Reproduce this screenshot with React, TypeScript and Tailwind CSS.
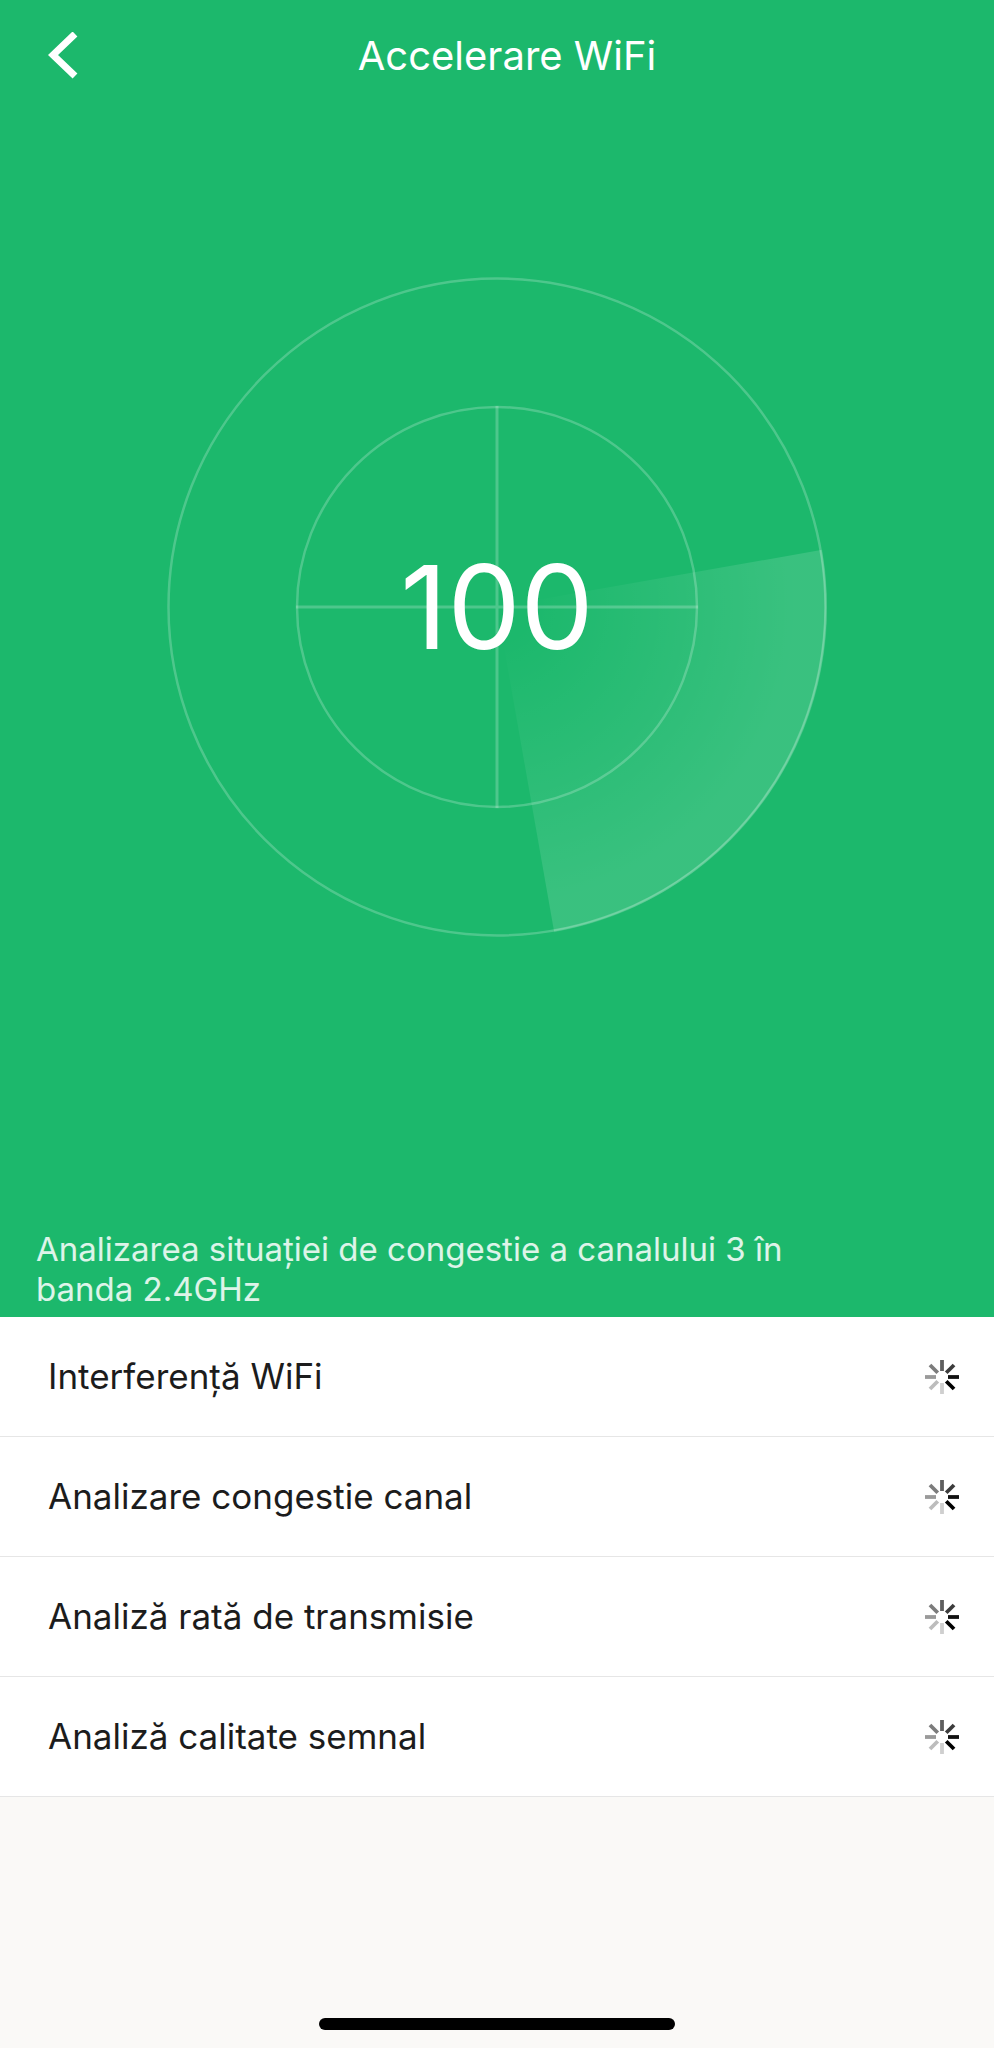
const checks = [
  "Interferență WiFi",
  "Analizare congestie canal",
  "Analiză rată de transmisie",
  "Analiză calitate semnal",
];

// clockwise, starting from the top spoke
const spokes = ["#5e5e5e", "#3c3c3c", "#111111", "#000000", "#cfcfcf", "#bcbcbc", "#9a9a9a", "#7c7c7c"];

function Spinner() {
  return (
    <svg viewBox="0 0 36 36" className="size-9 shrink-0" role="img" aria-label="Se analizează">
      {spokes.map((color, i) => (
        <line
          key={color}
          x1="18"
          y1="1"
          x2="18"
          y2="12"
          stroke={color}
          strokeWidth="3.8"
          transform={`rotate(${i * 45} 18 18)`}
        />
      ))}
    </svg>
  );
}

function Radar({ score }: { score: number }) {
  return (
    <div className="grid w-2/3 max-w-[660px] place-items-center">
      <svg viewBox="0 0 660 660" className="col-start-1 row-start-1 w-full" aria-hidden="true">
        <defs>
          <radialGradient id="sweep" gradientUnits="userSpaceOnUse" cx="330" cy="330" r="329">
            <stop offset="0.1" stopColor="#fff" stopOpacity="0" />
            <stop offset="0.9" stopColor="#fff" stopOpacity="0.13" />
          </radialGradient>
        </defs>
        <path d="M330 330 L654 273 A329 329 0 0 1 387 654 Z" fill="url(#sweep)" />
        <g fill="none" stroke="#fff" strokeOpacity="0.22" strokeWidth="2.5">
          <circle cx="330" cy="330" r="328.5" />
          <circle cx="330" cy="330" r="200" />
          <path d="M129 330 H531 M330 129 V531" strokeWidth="3" />
          <path d="M654 273 A329 329 0 0 1 387 654" strokeOpacity="0.1" />
        </g>
      </svg>
      <p className="col-start-1 row-start-1 text-[116px] leading-none text-white">{score}</p>
    </div>
  );
}

export default function App() {
  return (
    <div className="flex min-h-screen flex-col bg-[#faf9f7] font-['Inter','Liberation_Sans',sans-serif]">
      <section className="bg-[#1cb86c] text-white">
        <header className="grid h-28 grid-cols-[1fr_auto_1fr] items-center pr-7 pl-12">
          <button type="button" aria-label="Înapoi" className="justify-self-start">
            <svg viewBox="0 0 30 48" className="h-12 w-[30px]" fill="none" stroke="currentColor" strokeWidth="7">
              <path d="M27 2 L5 23 L27 44" />
            </svg>
          </button>
          <h1 className="text-[40px] leading-12">Accelerare WiFi</h1>
        </header>
        <div className="flex justify-center pt-[165px] pb-73">
          <Radar score={100} />
        </div>
        <p className="w-5/6 px-9 pb-2 text-[33px] leading-10 text-white/85">
          Analizarea situației de congestie a canalului 3 în banda 2.4GHz
        </p>
      </section>

      <ul className="bg-white">
        {checks.map((label) => (
          <li
            key={label}
            className="flex h-30 items-center justify-between border-b border-[#e6e6e6] pr-[34px] pl-12 text-[35px] text-[#1c1c1c]"
          >
            {label}
            <Spinner />
          </li>
        ))}
      </ul>

      <div className="mx-auto mt-auto mb-[18px] h-3 w-[356px] rounded-full bg-black" />
    </div>
  );
}
